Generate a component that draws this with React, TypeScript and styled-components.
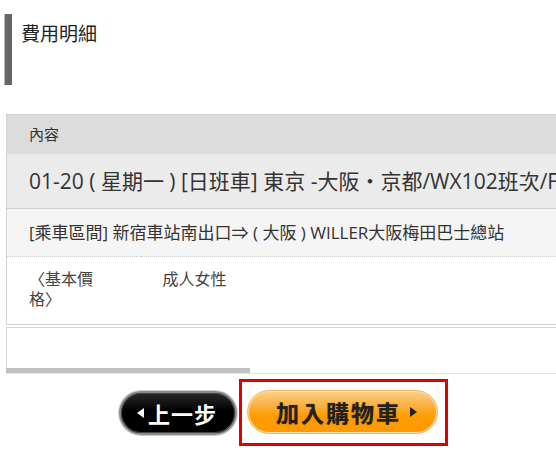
import React, { FC } from 'react';
import styled, { createGlobalStyle } from 'styled-components';

const GlobalStyle = createGlobalStyle`
  html, body {
    margin: 0;
    padding: 0;
    background: #fff;
  }
  body {
    font-family: "Open Sans", "Noto Sans CJK TC", sans-serif;
    color: #333;
  }
`;

const VIEW_WIDTH = 550;
const CONTENT_WIDTH = 1240;

const Page = styled.div`
  width: 556px;
  height: 462px;
  overflow: hidden;
  padding: 14px 0 0 5px;
  box-sizing: border-box;
`;

const Title = styled.h2`
  margin: 0;
  height: 71px;
  box-sizing: border-box;
  border-left: 7px solid #666;
  box-shadow: -1px 0 0 #b5b5b5;
  padding: 7px 0 0 9px;
  font-family: "Noto Sans CJK TC", sans-serif;
  font-size: 19px;
  font-weight: 400;
  line-height: 24px;
  color: #222;
`;

const Scroller = styled.div`
  margin: 29px 0 0 1px;
  overflow: hidden;
`;

const Inner = styled.div`
  width: ${CONTENT_WIDTH}px;
`;

const Table = styled.table`
  width: 100%;
  border-collapse: collapse;
  border: 1px solid #d2d2d2;
`;

const Row = styled.tr<{ $bg: string; $line: string }>`
  background: ${p => p.$bg};
  border-bottom: ${p => p.$line};
`;

const Cell = styled.td<{ $size: number; $height: number }>`
  height: ${p => p.$height}px;
  box-sizing: border-box;
  padding: 0 22px;
  font-size: ${p => p.$size}px;
  line-height: 22px;
  white-space: nowrap;
  vertical-align: middle;
`;

const PriceLabel = styled.td`
  width: 134px;
  box-sizing: border-box;
  padding: 11px 40px 16px 22px;
  font-family: "Noto Sans CJK TC", sans-serif;
  font-size: 16px;
  line-height: 20px;
  vertical-align: top;
  color: #444;
`;

const PriceValue = styled.td`
  padding: 11px 22px 16px 22px;
  font-family: "Noto Sans CJK TC", sans-serif;
  font-size: 16px;
  line-height: 20px;
  vertical-align: top;
  color: #444;
`;

const EmptyBox = styled.div`
  margin-top: 2px;
  height: 40px;
  border: 1px solid #d6d6d6;
  border-bottom: none;
`;

const ScrollTrack = styled.div`
  margin-left: 1px;
  height: 5px;
  border-bottom: 1px solid #e4e4e4;
  background: #fff;
`;

const ScrollThumb = styled.div`
  height: 100%;
  background: #c1c1c1;
`;

const Actions = styled.div`
  display: flex;
  align-items: center;
  margin: 5px 0 0 114px;
  gap: 2px;
`;

const Pill = styled.button`
  display: flex;
  align-items: center;
  justify-content: center;
  height: 44px;
  border-radius: 22px;
  padding: 0;
  cursor: pointer;
  font-family: "Noto Sans CJK TC", sans-serif;
  font-weight: 700;
`;

const BackButton = styled(Pill)`
  width: 118px;
  gap: 4px;
  border: 2px solid #8a8a8a;
  background: linear-gradient(#2a2a2a 0%, #000 45%, #000 100%);
  box-shadow: inset 0 0 0 1px #444, 0 0 0 1px #cfcfcf;
  color: #fff;
  font-size: 22px;
  letter-spacing: 1px;
  padding-right: 2px;
`;

const CartFrame = styled.div`
  border: 3px solid #e00000;
  padding: 8px 7px 9px 5px;
`;

const CartButton = styled(Pill)`
  width: 191px;
  gap: 9px;
  padding-left: 8px;
  border: 1px solid #f5b870;
  background: linear-gradient(#fcd089 0%, #fbb040 35%, #ff9c00 60%, #ff9a00 100%);
  box-shadow: inset 0 0 0 1px #fde0a8;
  color: #222;
  font-size: 23px;
  letter-spacing: 2px;
  text-shadow: 0 0 1px #6a4000;
`;

const Arrow = styled.span<{ $dir: 'left' | 'right'; $color: string }>`
  width: 0;
  height: 0;
  border-top: 5px solid transparent;
  border-bottom: 5px solid transparent;
  ${p => (p.$dir === 'left'
    ? `border-right: 7px solid ${p.$color};`
    : `border-left: 7px solid ${p.$color};`)}
`;

const App: FC = () => {
  const thumbWidth = Math.round((VIEW_WIDTH * VIEW_WIDTH) / CONTENT_WIDTH);

  return (
    <>
      <GlobalStyle />
      <Page>
        <Title>費用明細</Title>
        <Scroller>
          <Inner>
            <Table>
              <tbody>
                <Row $bg="#dcdcdc" $line="none">
                  <Cell colSpan={2} $size={15} $height={39}>內容</Cell>
                </Row>
                <Row $bg="#ebebeb" $line="1px solid #cfcfcf">
                  <Cell colSpan={2} $size={21} $height={55}>
                    01-20 ( 星期一 ) [日班車] 東京 -大阪・京都/WX102班次/F
                  </Cell>
                </Row>
                <Row $bg="#f5f5f5" $line="1px dotted #cfcfcf">
                  <Cell colSpan={2} $size={17} $height={48}>
                    [乘車區間] 新宿車站南出口⇒ ( 大阪 ) WILLER大阪梅田巴士總站
                  </Cell>
                </Row>
                <Row $bg="#fff" $line="1px solid #d2d2d2">
                  <PriceLabel>〈基本價格〉</PriceLabel>
                  <PriceValue>成人女性</PriceValue>
                </Row>
              </tbody>
            </Table>
            <EmptyBox />
          </Inner>
        </Scroller>
        <ScrollTrack>
          <ScrollThumb style={{ width: thumbWidth }} />
        </ScrollTrack>
        <Actions>
          <BackButton>
            <Arrow $dir="left" $color="#fff" />
            上一步
          </BackButton>
          <CartFrame>
            <CartButton>
              加入購物車
              <Arrow $dir="right" $color="#222" />
            </CartButton>
          </CartFrame>
        </Actions>
      </Page>
    </>
  );
};

export default App;
